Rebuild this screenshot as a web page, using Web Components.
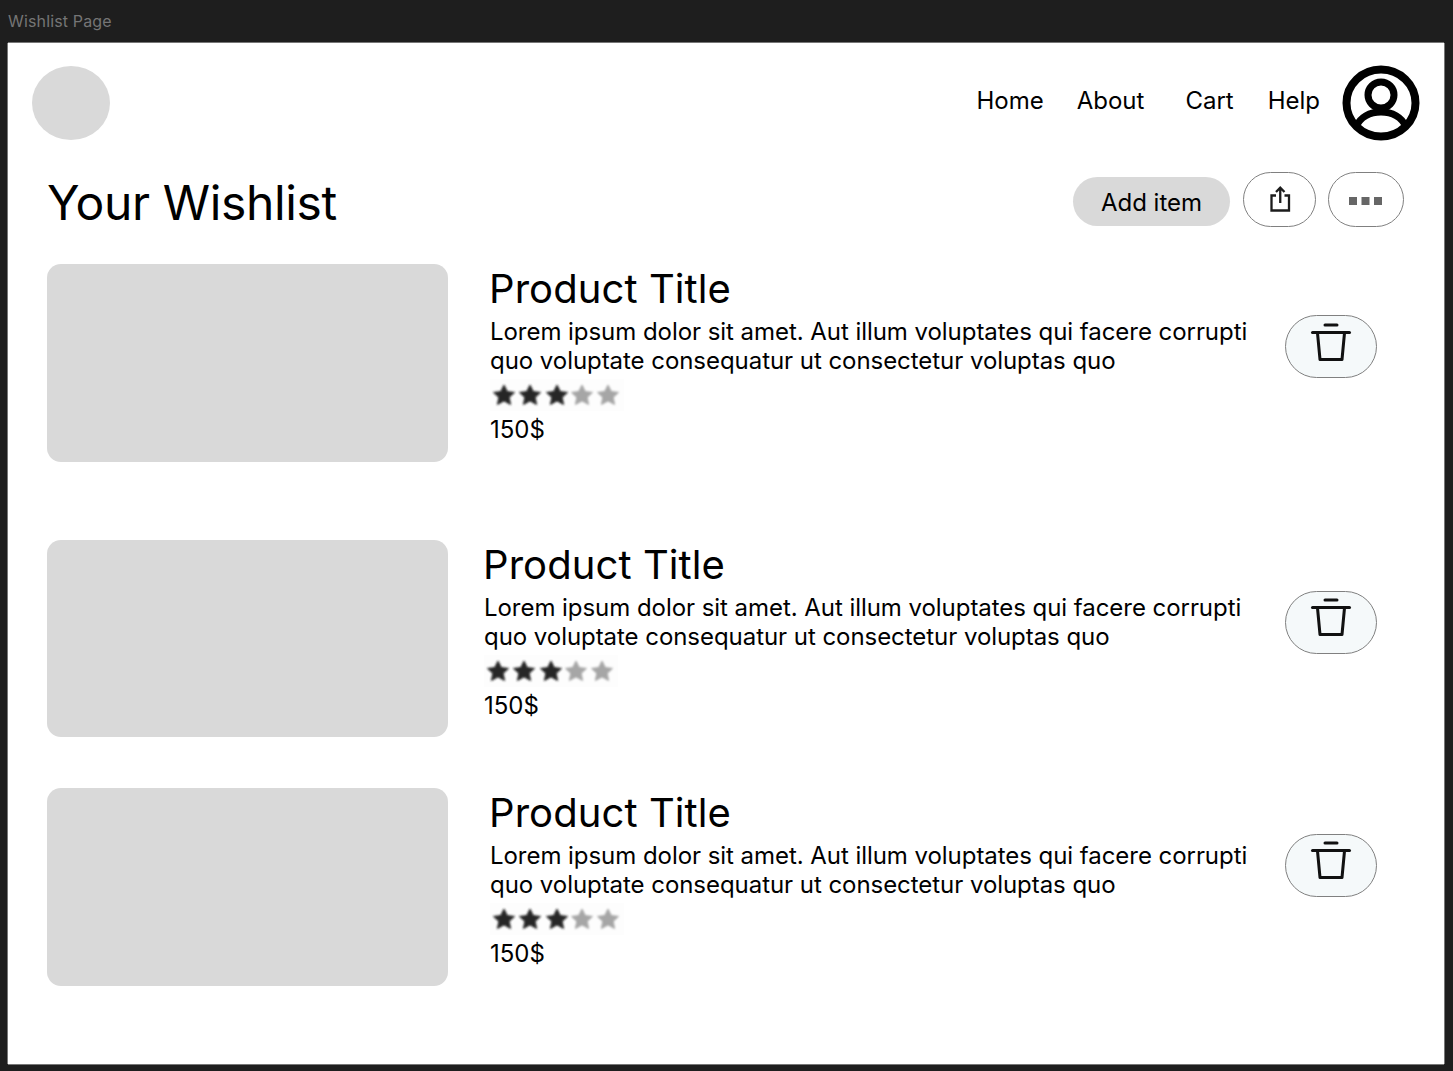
<!DOCTYPE html>
<html lang="en">
<head>
<meta charset="utf-8">
<title>Wishlist Page</title>
<style>
    html, body { margin: 0; height: 100%; }
    body {
        background: #1e1e1e;
        font-family: Inter, "Liberation Sans", sans-serif;
        color: #000;
        overflow: hidden;
    }
</style>
</head>
<body>
<wish-frame label="Wishlist Page">
    <site-header></site-header>
    <wish-toolbar heading="Your Wishlist"></wish-toolbar>
    <wish-item style="--text-gap:42px;--after:78px;--height:198px;--btn-top:51px"></wish-item>
    <wish-item style="--text-gap:36px;--after:51px;--height:197px;--btn-top:50.5px"></wish-item>
    <wish-item style="--text-gap:42px;--after:0px;--height:198px;--btn-top:45.5px"></wish-item>
</wish-frame>

<script>
class WishFrame extends HTMLElement {
    constructor() {
        super();
        this._shadowDOM = this.attachShadow({mode:"open"});
    }

    connectedCallback() {
        this._shadowDOM.innerHTML = `
        <style>
            :host { display: block; }
            .bar {
                height: 43px;
                padding-left: 8px;
                box-sizing: border-box;
                font-size: 16px;
                letter-spacing: 0.15px;
                line-height: 42px;
                color: #757575;
            }
            .canvas {
                margin: 0 9px 0 8px;
                height: 1021px;
                background: #fff;
                box-shadow: 0 -1px 0 #777, -1px 0 0 #777, 1px 0 0 #777, 0 1px 0 #777;
                box-sizing: border-box;
                padding-top: 22px;
            }
        </style>
        <div class="bar">${this.getAttribute("label")}</div>
        <div class="canvas"><slot></slot></div>
        `;
    }
}

class SiteHeader extends HTMLElement {
    constructor() {
        super();
        this._shadowDOM = this.attachShadow({mode:"open"});
    }

    connectedCallback() {
        this._shadowDOM.innerHTML = `
        <style>
            :host {
                display: flex;
                align-items: center;
                justify-content: space-between;
                padding: 0 24px;
                height: 76px;
            }
            .logo {
                width: 78px;
                height: 74px;
                border-radius: 50%;
                background: #d9d9d9;
            }
            nav {
                display: flex;
                align-items: center;
                gap: 33px;
                font-size: 24px;
                line-height: 29px;
            }
            nav span { position: relative; top: -3px; }
            .about { margin-right: 8px; }
            .help { margin-left: 1px; }
            svg { display: block; margin-left: -11px; }
        </style>
        <div class="logo"></div>
        <nav>
            <span>Home</span>
            <span class="about">About</span>
            <span>Cart</span>
            <span class="help">Help</span>
            <svg width="78" height="76" viewBox="0 0 78 76" fill="none" stroke="#000" stroke-width="8">
                <ellipse cx="39" cy="38" rx="34.500" ry="33.500"/>
                <circle cx="39" cy="30" r="13" stroke-width="7"/>
                <path d="M14 62c4-10 14-15 25-15s21 5 25 15" stroke-width="7"/>
            </svg>
        </nav>
        `;
    }
}

class WishToolbar extends HTMLElement {
    constructor() {
        super();
        this._shadowDOM = this.attachShadow({mode:"open"});
    }

    connectedCallback() {
        this._shadowDOM.innerHTML = `
        <style>
            :host {
                display: flex;
                align-items: center;
                justify-content: space-between;
                height: 55px;
                margin: 31px 40px 37px 40px;
            }
            h1 {
                margin: 0 0 0 -1px;
                font-size: 48px;
                line-height: 58px;
                font-weight: 400;
                letter-spacing: -0.36px;
                position: relative;
                top: 3px;
            }
            .actions { display: flex; align-items: center; gap: 12px; }
            .add {
                width: 157px;
                height: 49px;
                margin-top: 3px;
                margin-right: 1px;
                border-radius: 25px;
                background: #d9d9d9;
                font-size: 24px;
                line-height: 51px;
                text-align: center;
            }
            .round {
                height: 55px;
                box-sizing: border-box;
                border: 1px solid #808080;
                border-radius: 28px;
                background: #fff;
                display: flex;
                align-items: center;
                justify-content: center;
            }
            .share { width: 73px; }
            .more { width: 76px; }
            .more svg { margin-top: 3px; }
            svg { display: block; }
        </style>
        <h1>${this.getAttribute("heading")}</h1>
        <div class="actions">
            <div class="add">Add item</div>
            <div class="round share">
                <svg width="24" height="28" viewBox="0 0 24 28" fill="none" stroke="#1c1c1c" stroke-width="2.300">
                    <path d="M8 9.500H3.500v15h17.500V9.500H16.500"/>
                    <path d="M12.250 17V2M8 6l4.250-4.250L16.500 6"/>
                </svg>
            </div>
            <div class="round more">
                <svg width="34" height="9" viewBox="0 0 34 9" fill="#666">
                    <rect x="0" width="8" height="8"/>
                    <rect x="12.500" width="8" height="8"/>
                    <rect x="25" width="8" height="8"/>
                </svg>
            </div>
        </div>
        `;
    }
}

class StarRating extends HTMLElement {
    constructor() {
        super();
        this._shadowDOM = this.attachShadow({mode:"open"});
    }

    connectedCallback() {
        const star = "M0-10 3.300-3.400 10.500-2.600 5.200 2.300 6.600 9.500 0 5.900-6.600 9.500-5.200 2.300-10.500-2.600-3.300-3.400Z";
        const places = [[14,"#262626"],[40,"#262626"],[67,"#262626"],[92,"#a6a6a6"],[118,"#a6a6a6"]];
        const paths = places.map(([x, fill]) =>
            `<path transform="translate(${x} 16)" d="${star}" fill="${fill}" stroke="${fill}" stroke-width="1" stroke-linejoin="round"/>`).join("");
        this._shadowDOM.innerHTML = `
        <style>
            :host { display: block; width: 134px; height: 32px; background: #fdfdfd; }
            svg { display: block; }
        </style>
        <svg width="134" height="32" viewBox="0 0 134 32">
            <defs><filter id="soft"><feGaussianBlur stdDeviation="0.9"/></filter></defs>
            <g filter="url(#soft)">${paths}</g>
        </svg>
        `;
    }
}

class TrashButton extends HTMLElement {
    constructor() {
        super();
        this._shadowDOM = this.attachShadow({mode:"open"});
    }

    connectedCallback() {
        this._shadowDOM.innerHTML = `
        <style>
            :host {
                display: flex;
                align-items: center;
                justify-content: center;
                width: 92px;
                height: 63px;
                box-sizing: border-box;
                border: 1px solid #808080;
                border-radius: 32px;
                background: #f5f9fa;
            }
            svg { display: block; margin-top: -10px; }
        </style>
        <svg width="42" height="42" viewBox="0 0 42 42" fill="none" stroke="#111" stroke-width="3" stroke-linecap="round">
            <path d="M15 4h12"/>
            <path d="M2.500 11.500h37"/>
            <path d="M7.500 12l2.500 26.500h22L34.500 12" stroke-linejoin="round"/>
        </svg>
        `;
    }
}

class WishItem extends HTMLElement {
    constructor() {
        super();
        this._shadowDOM = this.attachShadow({mode:"open"});
    }

    connectedCallback() {
        this._shadowDOM.innerHTML = `
        <style>
            :host {
                display: flex;
                align-items: flex-start;
                height: var(--height);
                margin: 0 67px var(--after) 39px;
            }
            .picture {
                flex: 0 0 401px;
                height: 100%;
                border-radius: 14px;
                background: #d9d9d9;
            }
            .text {
                flex: 1;
                margin-left: var(--text-gap);
            }
            h2 {
                margin: 1px 0 0 -1px;
                font-size: 40px;
                line-height: 48px;
                font-weight: 400;
                letter-spacing: 0.08px;
            }
            p {
                margin: 4px 0 0;
                width: 770px;
                font-size: 24px;
                line-height: 29px;
                letter-spacing: -0.05px;
            }
            star-rating { margin: 4px 0 0 0; }
            .price {
                font-size: 24px;
                line-height: 29px;
                margin-top: 4px;
            }
            trash-button { margin-top: var(--btn-top); flex: none; }
        </style>
        <div class="picture"></div>
        <div class="text">
            <h2>Product Title</h2>
            <p>Lorem ipsum dolor sit amet. Aut illum voluptates qui facere corrupti quo voluptate consequatur ut consectetur voluptas quo</p>
            <star-rating></star-rating>
            <div class="price">150$</div>
        </div>
        <trash-button></trash-button>
        `;
    }
}

customElements.define("wish-frame", WishFrame);
customElements.define("site-header", SiteHeader);
customElements.define("wish-toolbar", WishToolbar);
customElements.define("star-rating", StarRating);
customElements.define("trash-button", TrashButton);
customElements.define("wish-item", WishItem);
</script>
</body>
</html>
